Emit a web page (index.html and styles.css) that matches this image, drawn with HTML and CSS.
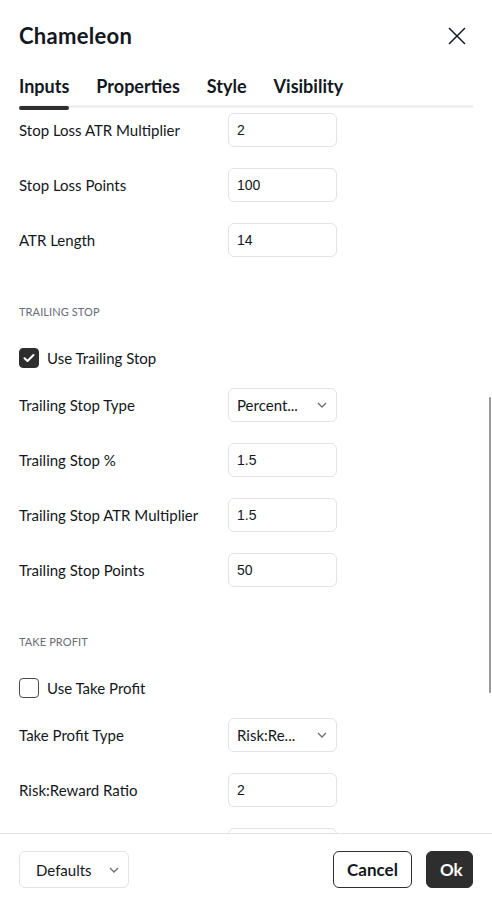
FILE: index.html
```html
<!DOCTYPE html>
<html>
<head>
<meta charset="utf-8">
<link rel="stylesheet" href="styles.css">
</head>
<body>
<div class="dialog">
  <header class="head">
    <h1 class="title">Chameleon</h1>
    <button class="close" aria-label="Close">
      <svg width="18" height="18" viewBox="0 0 18 18"><path d="M1 1L17 17M17 1L1 17" stroke="#131722" stroke-width="1.5" fill="none"/></svg>
    </button>
  </header>
  <nav class="tabs">
    <span class="tab active">Inputs</span>
    <span class="tab">Properties</span>
    <span class="tab">Style</span>
    <span class="tab">Visibility</span>
  </nav>
  <div class="body">
    <div class="content">
      <div class="row"><span class="label">Stop Loss ATR Multiplier</span><div class="field">2</div></div>
      <div class="row"><span class="label">Stop Loss Points</span><div class="field">100</div></div>
      <div class="row"><span class="label">ATR Length</span><div class="field">14</div></div>
      <div class="section">TRAILING STOP</div>
      <div class="check-row"><span class="box checked"><svg width="12" height="10" viewBox="0 0 12 10"><path d="M1.5 5.2L4.5 8L10.5 2" stroke="#fff" stroke-width="2" fill="none" stroke-linecap="round" stroke-linejoin="round"/></svg></span><span class="label">Use Trailing Stop</span></div>
      <div class="row"><span class="label">Trailing Stop Type</span><div class="field select"><span class="sel-text">Percent...</span><svg class="chev" width="10" height="6" viewBox="0 0 10 6"><path d="M1 1L5 5L9 1" stroke="#6a6d78" stroke-width="1.3" fill="none"/></svg></div></div>
      <div class="row"><span class="label">Trailing Stop %</span><div class="field">1.5</div></div>
      <div class="row"><span class="label">Trailing Stop ATR Multiplier</span><div class="field">1.5</div></div>
      <div class="row"><span class="label">Trailing Stop Points</span><div class="field">50</div></div>
      <div class="section">TAKE PROFIT</div>
      <div class="check-row"><span class="box"></span><span class="label">Use Take Profit</span></div>
      <div class="row"><span class="label">Take Profit Type</span><div class="field select"><span class="sel-text">Risk:Re...</span><svg class="chev" width="10" height="6" viewBox="0 0 10 6"><path d="M1 1L5 5L9 1" stroke="#6a6d78" stroke-width="1.3" fill="none"/></svg></div></div>
      <div class="row"><span class="label">Risk:Reward Ratio</span><div class="field">2</div></div>
      <div class="row"><span class="label"></span><div class="field"></div></div>
    </div>
    <div class="thumb"></div>
  </div>
  <footer class="foot">
    <div class="defaults"><span>Defaults</span><svg class="chev" width="10" height="6" viewBox="0 0 10 6"><path d="M1 1L5 5L9 1" stroke="#6a6d78" stroke-width="1.3" fill="none"/></svg></div>
    <div class="actions">
      <button class="btn cancel">Cancel</button>
      <button class="btn ok">Ok</button>
    </div>
  </footer>
</div>
</body>
</html>
```

FILE: styles.css
```css
* { box-sizing: border-box; }
html, body { margin: 0; padding: 0; background: #fff; }
body {
  font-family: "Lato", "Noto Sans", sans-serif;
  color: #131722;
  width: 492px;
  height: 905px;
  overflow: hidden;
}
.dialog {
  display: flex;
  flex-direction: column;
  height: 905px;
}
.head {
  display: flex;
  align-items: center;
  justify-content: space-between;
  padding: 20px 26px 0 19px;
  height: 52px;
}
.title {
  margin: 0;
  font-size: 22px;
  font-weight: 700;
  line-height: 30px;
  letter-spacing: 0.3px;
}
.close {
  border: 0;
  background: none;
  padding: 0;
  width: 18px;
  height: 18px;
  display: flex;
}
.tabs {
  display: flex;
  gap: 27px;
  margin: 20px 19px 0 19px;
  height: 36px;
  padding-top: 2px;
  border-bottom: 3px solid #f0f0f0;
  position: relative;
}
.tab {
  font-size: 18px;
  font-weight: 700;
  letter-spacing: 0;
  line-height: 24px;
  position: relative;
  height: 33px;
}
.tab.active::after {
  content: "";
  position: absolute;
  left: 0;
  right: 0;
  bottom: -3px;
  height: 4px;
  border-radius: 2px;
  background: #2e2e2e;
}
.body {
  flex: 1;
  overflow: hidden;
  position: relative;
}
.content {
  padding: 5px 19px 0 19px;
  display: flex;
  flex-direction: column;
}
.row {
  display: flex;
  align-items: center;
  height: 34px;
  margin-bottom: 21px;
}
.label {
  font-size: 15px;
  line-height: 20px;
  width: 209px;
  flex: none;
}
.field {
  width: 109px;
  height: 34px;
  border: 1px solid #e0e3eb;
  border-radius: 6px;
  padding: 0 8px;
  display: flex;
  align-items: center;
  font-family: "Liberation Sans", Arial, sans-serif;
  font-size: 14px;
}
.field.select {
  font-family: "Lato", "Noto Sans", sans-serif;
  font-size: 15px;
  justify-content: space-between;
  padding-right: 9px;
}
.chev { flex: none; }
.section {
  font-size: 11px;
  line-height: 16px;
  color: #6a6d78;
  margin-top: 26px;
  margin-bottom: 28px;
  letter-spacing: 0.1px;
}
.check-row {
  display: flex;
  align-items: center;
  height: 20px;
  margin-bottom: 20px;
}
.check-row .label { width: auto; margin-left: 8px; }
.box {
  width: 20px;
  height: 20px;
  border: 1px solid #4a4a4a;
  border-radius: 4px;
  display: flex;
  align-items: center;
  justify-content: center;
}
.box.checked {
  background: #2e2e2e;
  border-color: #2e2e2e;
}
.thumb {
  position: absolute;
  right: 1px;
  top: 289px;
  width: 2px;
  height: 296px;
  background: #9a9a9a;
  border-radius: 1px;
}
.foot {
  border-top: 1px solid #e0e3eb;
  height: 72px;
  display: flex;
  align-items: center;
  justify-content: space-between;
  padding: 0 19px 0 19px;
}
.defaults {
  width: 110px;
  height: 37px;
  border: 1px solid #e0e3eb;
  border-radius: 6px;
  display: flex;
  align-items: center;
  justify-content: space-between;
  padding: 0 9px 0 16px;
  font-size: 15px;
}
.actions { display: flex; gap: 14px; }
.btn {
  height: 37px;
  border-radius: 6px;
  font-family: "Lato", "Noto Sans", sans-serif;
  font-size: 17px;
  font-weight: 700;
  padding: 0 13px;
  color: #131722;
}
.cancel { background: #fff; border: 1px solid #2e2e2e; width: 79px; }
.ok { background: #2e2e2e; border: 1px solid #2e2e2e; color: #fff; width: 47px; }
```
